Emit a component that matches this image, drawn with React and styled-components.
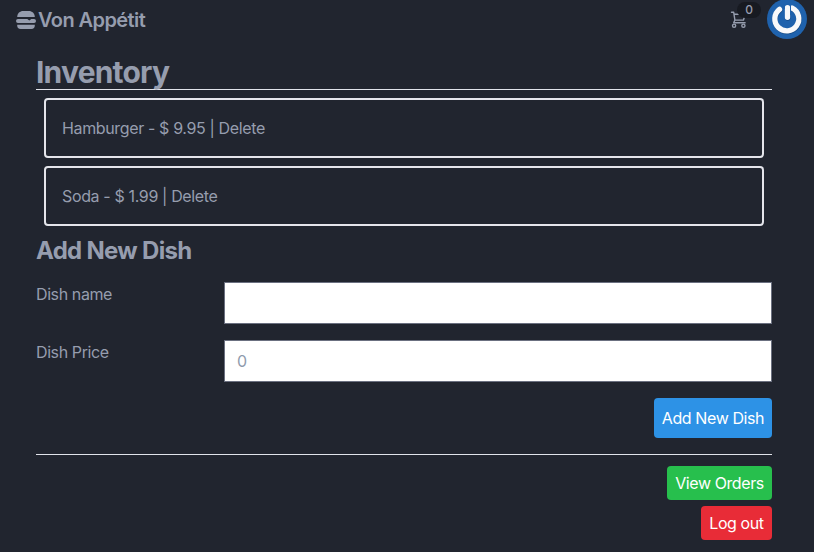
import React from "react";
import styled, { createGlobalStyle } from "styled-components";

const GlobalStyle = createGlobalStyle`
  *, *::before, *::after { box-sizing: border-box; }
  body {
    margin: 0;
    background: #21252f;
    color: #969dae;
    font: 400 16px/24px Inter, "Liberation Sans", sans-serif;
    overflow: hidden;
  }
  h1, h2 { margin: 0; }
`;

const Header = styled.header`
  display: flex;
  align-items: center;
  justify-content: space-between;
  height: 40px;
  padding: 0 7px 2px 16px;
`;
const Brand = styled.div`
  display: flex;
  align-items: center;
  gap: 2px;
  padding-top: 2px;
  font-size: 20px;
  line-height: 28px;
  font-weight: 600;
  letter-spacing: -0.58px;
  white-space: nowrap;
`;
const BurgerIcon = styled.svg`
  display: block;
  width: 20px;
  height: 20px;
  fill: currentColor;
`;
const Actions = styled.div`
  display: flex;
  align-items: center;
  gap: 19px;
`;
const Cart = styled.div`
  position: relative;
  display: flex;
  width: 20px;
  height: 20px;
`;
const CartIcon = styled.svg`
  width: 20px;
  height: 20px;
  fill: none;
  stroke: currentColor;
  stroke-width: 1.4;
  stroke-linecap: round;
  stroke-linejoin: round;
`;
const Badge = styled.span`
  position: absolute;
  left: 9px;
  top: -7px;
  width: 24px;
  height: 16px;
  border-radius: 8px;
  background: #171a21;
  font-size: 12px;
  line-height: 16px;
  font-weight: 500;
  text-align: center;
`;
const Avatar = styled.svg`
  display: block;
  width: 40px;
  height: 40px;
`;
const Main = styled.main`
  display: flex;
  flex-direction: column;
  margin: 13px 42px 0 36px;
`;
const Title = styled.h1`
  height: 37px;
  border-bottom: 1px solid #e1e3ea;
  font-size: 30px;
  line-height: 38px;
  font-weight: 700;
  letter-spacing: -0.8px;
`;
const DishList = styled.div`
  display: flex;
  flex-direction: column;
  gap: 8px;
  padding: 8px;
`;
const Dish = styled.div`
  height: 60px;
  padding: 16px;
  border: 2px solid #e4e5eb;
  border-radius: 4px;
  letter-spacing: -0.36px;
`;
const Subtitle = styled.h2`
  height: 32px;
  font-size: 24px;
  line-height: 34px;
  font-weight: 700;
  letter-spacing: -0.7px;
`;
const Form = styled.form`
  display: flex;
  flex-direction: column;
  gap: 16px;
  padding: 16px 0;
  border-bottom: 1px solid #e1e3ea;
`;
const Field = styled.label`
  display: grid;
  grid-template-columns: 188px 1fr;
  letter-spacing: -0.4px;
`;
const Input = styled.input`
  width: 100%;
  height: 42px;
  padding: 8px 12px;
  border: 1px solid #6b7080;
  border-radius: 0;
  background: #fff;
  color: #6b7280;
  font: inherit;
  outline: none;
  &::placeholder { color: #8f9bad; opacity: 1; }
`;
const Button = styled.button`
  align-self: flex-end;
  width: ${(p) => p.$width};
  height: ${(p) => p.$height || "34px"};
  padding: 0;
  border: 0;
  border-radius: 4px;
  background: ${(p) => p.$color};
  color: #fff;
  font: inherit;
  letter-spacing: -0.4px;
  white-space: nowrap;
`;
const Footer = styled.div`
  display: flex;
  flex-direction: column;
  gap: 6px;
  padding-top: 11px;
`;

function Burger() {
  return (
    <BurgerIcon viewBox="0 0 20 20">
      <path d="M1.2 7C1.2 3.3 4 1 7.2 1h5.6c3.2 0 6 2.3 6 6z" />
      <path d="M2 8.9h9.3l2 1.5 2-1.5H18a2 2 0 0 1 0 4H2a2 2 0 0 1 0-4z" />
      <path d="M1.2 14.8h17.6v.8a3.4 3.4 0 0 1-3.4 3.4H4.6a3.4 3.4 0 0 1-3.4-3.4z" />
    </BurgerIcon>
  );
}

function ShoppingCart() {
  return (
    <CartIcon viewBox="0 0 20 20">
      <path d="M3.5 3.3h2.2l1.2 7.8h8.6l1.6-5.9H6.2M6.9 11.1l-1.2 2.7h11.4" />
      <circle cx="6.1" cy="16.7" r="1.6" />
      <circle cx="15.4" cy="16.7" r="1.6" />
    </CartIcon>
  );
}

function PowerAvatar() {
  return (
    <Avatar viewBox="0 0 40 40">
      <circle cx="20" cy="20" r="20" fill="#1f62ad" />
      <g fill="none" strokeLinecap="round" strokeWidth="5.3">
        <path d="M12.5 10.3A12 12 0 1 0 25.2 9.1M20.5 8.6V18.3" stroke="#174a83" transform="translate(.3 .8)" />
        <path d="M12.5 10.3A12 12 0 1 0 25.2 9.1M20.5 8.6V18.3" stroke="#f8f9fb" />
      </g>
      <path d="M17.3 5V10M23.5 5V16" stroke="#1f62ad" strokeWidth="1" />
    </Avatar>
  );
}

export default function App() {
  return (
    <>
      <GlobalStyle />
      <Header>
        <Brand><Burger />Von Appétit</Brand>
        <Actions>
          <Cart><ShoppingCart /><Badge>0</Badge></Cart>
          <PowerAvatar />
        </Actions>
      </Header>
      <Main>
        <Title>Inventory</Title>
        <DishList>
          <Dish>Hamburger - $ 9.95 | Delete</Dish>
          <Dish>Soda - $ 1.99 | Delete</Dish>
        </DishList>
        <Subtitle>Add New Dish</Subtitle>
        <Form>
          <Field>Dish name<Input type="text" /></Field>
          <Field>Dish Price<Input type="text" placeholder="0" /></Field>
          <Button type="button" $width="118px" $height="40px" $color="#2d92e6">Add New Dish</Button>
        </Form>
        <Footer>
          <Button type="button" $width="105px" $color="#27bf4d">View Orders</Button>
          <Button type="button" $width="71px" $color="#e82c37">Log out</Button>
        </Footer>
      </Main>
    </>
  );
}
